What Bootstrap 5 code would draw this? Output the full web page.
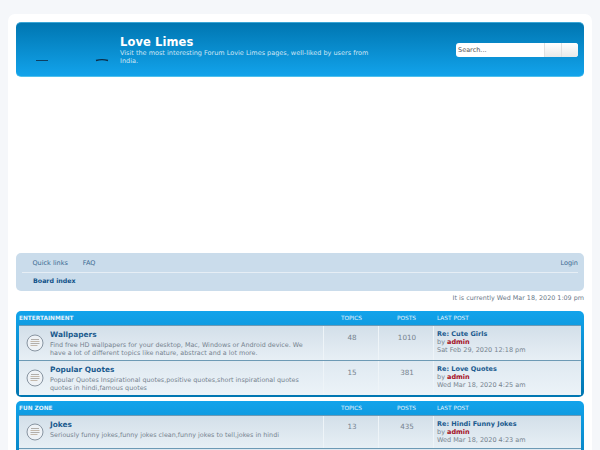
<!DOCTYPE html>
<html lang="en">
<head>
  <meta charset="UTF-8">
  <title>Love Limes - Board index</title>
  <link href="https://cdn.jsdelivr.net/npm/bootstrap@5.3.3/dist/css/bootstrap.min.css" rel="stylesheet">
  <style>
    html { overflow: hidden; }
    body { background: #f5f7fa; font-family: "DejaVu Sans", sans-serif; font-size: 6.5px; line-height: 1.4; color: #536482; padding: 14px 8px 0; height: 450px; overflow: hidden; }
    .page-wrap { background: #fff; border-radius: 7px 7px 0 0; padding: 8px; height: 600px; }
    .site-head { background: linear-gradient(#0076b1, #12a3eb); border-bottom: 1px solid #4fc0ec; border-top: 1px solid #3aa6d6; border-radius: 5px; height: 55px; padding: 0 6px 0 20px; color: #e8f4fb; }
    .site-logo { width: 84px; height: 55px; flex: none; }
    .site-name { font-size: 11.5px; font-weight: 700; line-height: 14px; color: #fff; letter-spacing: .1px; margin: 0; }
    .site-desc { width: 250px; line-height: 8px; font-size: 6.5px; color: #cfe6f5; margin: 0; }
    .search-box { width: 122px; height: 14px; background: #fff; border-radius: 3px; overflow: hidden; }
    .search-text { flex: 1; padding-left: 2px; color: #555; font-size: 6.5px; line-height: 14px; }
    .search-btn { width: 17px; background: linear-gradient(#fff, #e9e9e9); border-left: 1px solid #e0e0e0; }
    .ad-gap { height: 176px; }
    .nav-panel { background: #cadceb; border-radius: 5px; height: 38px; padding: 0 6px; font-size: 6.5px; color: #3b6a92; }
    .nav-top { height: 20px; border-bottom: 1px solid #e6eef5; padding: 2px 0 0 10.5px; gap: 15px; }
    .nav-crumb { height: 18px; padding: 0 0 1px 11px; font-weight: 700; color: #105289; font-size: 6.3px; }
    .time-line { text-align: right; font-size: 6.4px; color: #6a7788; line-height: 10px; margin: 2px 0 8px; }
    .cat-box { background: linear-gradient(#12a3eb 0, #0076b1 100%); border-radius: 5px; padding: 1px 3px 2px; margin-bottom: 4px; }
    .cat-head { height: 13px; color: #e4f3fc; font-size: 5.8px; line-height: 13px; }
    .cat-name { flex: 1; font-weight: 700; }
    .col-topics, .col-posts { width: 55px; flex: none; text-align: center; padding-left: 2px; }
    .col-last { width: 148px; flex: none; padding-left: 4px; }
    .forum-row { border-top: 1px solid #6d9ab5; background: linear-gradient(#d3dfe9, #e7eff5); min-height: 35px; }
    .forum-row:first-of-type { border-top: 0; }
    .forum-row.alt { background: linear-gradient(#dfe9f1, #ecf3f8); }
    .forum-row.short-row { min-height: 33px; }
    .forum-main { flex: 1; padding: 0 6px 0 7px; min-width: 0; }
    .forum-icon { width: 18px; height: 18px; flex: none; margin-right: 6px; }
    .forum-text { align-self: flex-start; padding-top: 3px; }
    .forum-title { font-size: 7.4px; font-weight: 700; color: #1a5a8e; line-height: 12px; }
    .forum-desc { font-size: 6.4px; line-height: 8px; color: #76838f; }
    .stat-num { border-left: 1px solid #eef4f8; font-size: 7.2px; line-height: 11px; color: #76838f; padding-top: 6px; }
    .short-row .stat-num { padding-top: 5px; }
    .last-post { font-size: 6.5px; line-height: 8.2px; padding: 4px 0 2px 3px; border-left: 1px solid #eef4f8; color: #76838f; }
    .last-title { font-weight: 700; color: #1a5a8e; display: block; }
    .last-user { font-weight: 700; color: #a50f1e; }
  </style>
</head>
<body>
  <div class="page-wrap">
    <div class="site-head d-flex align-items-center">
      <svg class="site-logo" viewBox="0 0 84 55">
        <path d="M0 38.5h12" stroke="#0c3f63" stroke-width="1"/>
        <path d="M60 38.5q6-1.6 12 0" stroke="#0c2c47" stroke-width="1.3" fill="none"/>
      </svg>
      <div class="flex-grow-1">
        <h1 class="site-name">Love Limes</h1>
        <p class="site-desc">Visit the most interesting Forum Lovie Limes pages, well-liked by users from India.</p>
      </div>
      <div class="search-box d-flex">
        <div class="search-text">Search...</div>
        <div class="search-btn"></div>
        <div class="search-btn"></div>
      </div>
    </div>

    <div class="ad-gap"></div>

    <div class="nav-panel">
      <div class="nav-top d-flex align-items-center">
        <span>Quick links</span>
        <span>FAQ</span>
        <span class="ms-auto">Login</span>
      </div>
      <div class="nav-crumb d-flex align-items-center">Board index</div>
    </div>
    <div class="time-line">It is currently Wed Mar 18, 2020 1:09 pm</div>

    <div class="cat-box">
      <div class="cat-head d-flex">
        <div class="cat-name">ENTERTAINMENT</div>
        <div class="col-topics">TOPICS</div>
        <div class="col-posts">POSTS</div>
        <div class="col-last">LAST POST</div>
      </div>
      <div class="forum-row d-flex">
        <div class="forum-main d-flex align-items-center">
          <svg class="forum-icon" viewBox="0 0 18 18"><circle cx="9" cy="9" r="8" fill="#eef2f6" stroke="#7d8a97" stroke-width=".9"/><g stroke-width=".8"><path d="M5 5.5h8M4.5 9.5h9" stroke="#a09c98"/><path d="M4.5 7.5h9M4.5 11.5h7" stroke="#b8a898"/></g></svg>
          <div class="forum-text">
            <div class="forum-title">Wallpapers</div>
            <div class="forum-desc">Find free HD wallpapers for your desktop, Mac, Windows or Android device. We have a lot of different topics like nature, abstract and a lot more.</div>
          </div>
        </div>
        <div class="col-topics stat-num">48</div>
        <div class="col-posts stat-num">1010</div>
        <div class="col-last last-post"><span class="last-title">Re: Cute Girls</span>by <span class="last-user">admin</span><br>Sat Feb 29, 2020 12:18 pm</div>
      </div>
      <div class="forum-row alt d-flex">
        <div class="forum-main d-flex align-items-center">
          <svg class="forum-icon" viewBox="0 0 18 18"><circle cx="9" cy="9" r="8" fill="#eef2f6" stroke="#7d8a97" stroke-width=".9"/><g stroke-width=".8"><path d="M5 5.5h8M4.5 9.5h9" stroke="#a09c98"/><path d="M4.5 7.5h9M4.5 11.5h7" stroke="#b8a898"/></g></svg>
          <div class="forum-text">
            <div class="forum-title">Popular Quotes</div>
            <div class="forum-desc">Popular Quotes Inspirational quotes,positive quotes,short inspirational quotes quotes in hindi,famous quotes</div>
          </div>
        </div>
        <div class="col-topics stat-num">15</div>
        <div class="col-posts stat-num">381</div>
        <div class="col-last last-post"><span class="last-title">Re: Love Quotes</span>by <span class="last-user">admin</span><br>Wed Mar 18, 2020 4:25 am</div>
      </div>
    </div>

    <div class="cat-box">
      <div class="cat-head d-flex">
        <div class="cat-name">FUN ZONE</div>
        <div class="col-topics">TOPICS</div>
        <div class="col-posts">POSTS</div>
        <div class="col-last">LAST POST</div>
      </div>
      <div class="forum-row short-row d-flex">
        <div class="forum-main d-flex align-items-center">
          <svg class="forum-icon" viewBox="0 0 18 18"><circle cx="9" cy="9" r="8" fill="#eef2f6" stroke="#7d8a97" stroke-width=".9"/><g stroke-width=".8"><path d="M5 5.5h8M4.5 9.5h9" stroke="#a09c98"/><path d="M4.5 7.5h9M4.5 11.5h7" stroke="#b8a898"/></g></svg>
          <div class="forum-text">
            <div class="forum-title">Jokes</div>
            <div class="forum-desc">Seriously funny jokes,funny jokes clean,funny jokes to tell,jokes in hindi</div>
          </div>
        </div>
        <div class="col-topics stat-num">13</div>
        <div class="col-posts stat-num">435</div>
        <div class="col-last last-post"><span class="last-title">Re: Hindi Funny Jokes</span>by <span class="last-user">admin</span><br>Wed Mar 18, 2020 4:23 am</div>
      </div>
      <div class="forum-row alt d-flex"></div>
    </div>
  </div>
  <script src="https://cdn.jsdelivr.net/npm/bootstrap@5.3.3/dist/js/bootstrap.bundle.min.js"></script>
</body>
</html>
